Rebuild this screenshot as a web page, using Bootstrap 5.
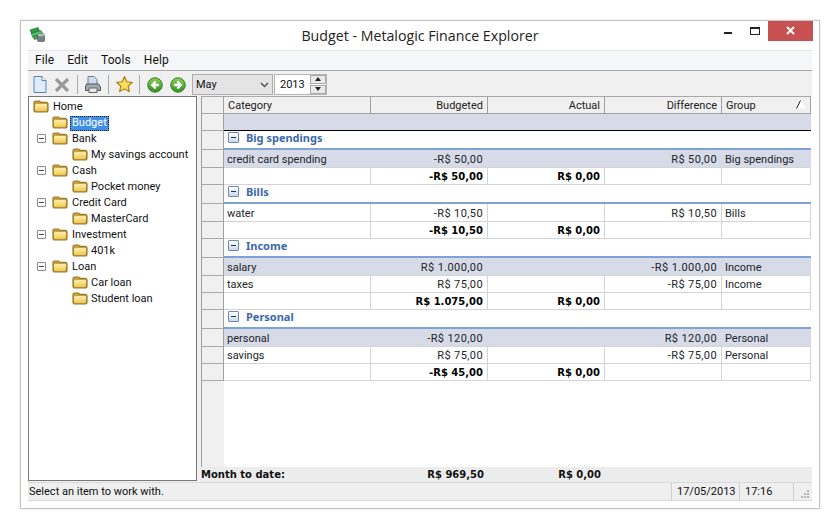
<!DOCTYPE html>
<html lang="en"><head><meta charset="utf-8"><title>Budget</title>
<link href="https://cdn.jsdelivr.net/npm/bootstrap@5.3.0/dist/css/bootstrap.min.css" rel="stylesheet">
<style>
html,body{height:100%;background:#fff;margin:0;overflow:hidden}
body{font:11px/14px Roboto,sans-serif;color:#111;padding:20px 20px 20px 20px}
.win{width:800px;height:489px;background:#fff;border:1px solid #c4c4c4;box-shadow:0 0 2px #ddd;padding:0 7px 7px}
.titlebar{height:29px;position:relative;flex:none}
.titlebar .t{font:14.2px/29px "Open Sans",sans-serif;color:#222;text-align:center;width:100%}
.appicon{position:absolute;left:1px;top:6px}
.wbtns{position:absolute;right:-1px;top:0;height:20px}
.wb{width:27px;height:20px}
.close{width:45px;height:20px;background:#c75050}
.menubar{height:21px;background:#f5f6f7;border-top:1px solid #e6e6e6;border-bottom:1px solid #a9a9a9;flex:none;font-size:12px;letter-spacing:.1px;padding-left:7px;gap:13px;line-height:19px}
.toolbar{height:25px;background:#f0f0f0;flex:none;padding:3px 0 0 0}
.sep{width:1px;height:19px;background:#aaa;margin:1px 0 0 7px}
.sep+svg{margin-left:7px}
.i-new{margin:2px 0 0 5px}.i-x{margin:4px 0 0 7px}.i-pr{margin-top:2px}.i-st{margin-top:2px}
.sep.s3{margin-left:6px}
.i-ar{margin:3px 0 0 7px}
.sel{width:81px;height:21px;background:#e4e4e4;border:1px solid #adadad;padding:0 3px;line-height:20px;margin-left:6px;position:relative}
.sel svg{position:absolute;right:3px;top:7px}
.spin{width:53px;height:21px;background:#fff;border:1px solid #b5b5b5;margin-left:1px;padding-left:5px;line-height:20px;position:relative}
.spin i{position:absolute;right:0;width:16px;height:9px;background:#eaeaea;border:1px solid #a8a8a8;display:block}
.spin i::after{content:"";position:absolute;left:4px;border:3px solid transparent}
.spin i.u{top:0}.spin i.u::after{top:-2px;border-bottom:4px solid #222}
.spin i.d{bottom:0}.spin i.d::after{top:1px;border-top:4px solid #222}
.main{flex:1;min-height:0;background:#f0f0f0}
.tree{width:169px;flex:none;height:385px;background:#fff;border:1px solid #777;padding-top:2px}
.node{height:16px;line-height:15px;white-space:nowrap}
.l1{padding-left:8px}.l0{padding-left:4px}.l2{padding-left:43px}
.node .lbl{margin-left:2px;display:inline-block;padding:0 2px;height:15px;line-height:14px}
.l2 .lbl{margin-left:1px}
.node .sp{display:inline-block;width:15px}
.node svg{vertical-align:-3px}
.tg{display:inline-block;width:9px;height:9px;border:1px solid #8a8a8a;border-radius:1px;position:relative;margin-right:6px;vertical-align:-1px}
.tg::after{content:"";position:absolute;left:1px;right:1px;top:3px;height:1px;background:#444}
.sel-lbl{background:#3f8fe8;color:#fff;outline:1px dotted #222;outline-offset:-1px}
.right{margin-left:4px;width:611px;flex:none;display:flex;flex-direction:column;min-width:0}
.gridarea{flex:1;background:#fff;position:relative;min-height:0}
.gridarea table{table-layout:fixed;border-collapse:separate;border-spacing:0;width:610px;margin:0;--bs-table-bg:transparent;font-size:11px;line-height:14px}
.gridarea::before{content:"";position:absolute;left:0;top:0;bottom:0;width:23px;background:#f0f0f0;border-left:1px solid #a0a0a0}
.gridarea td,.gridarea th{padding:0 3px 0 3px;border:0;border-right:1px solid #d4d4d4;border-bottom:1px solid #d4d4d4;font-weight:400;white-space:nowrap;overflow:hidden;position:relative;background-clip:padding-box}
.gridarea .r,.gridarea .n{padding-right:4px}
.gridarea td.rh,.gridarea th.rh{background:#f0f0f0;border-bottom:1px solid #a8a8a8;border-left:1px solid #a0a0a0;border-right:1px solid #a0a0a0;padding:0}
.gridarea thead th{height:18px;padding-top:2px;padding-left:4px;background:#f0f0f0;border-top:1px solid #a8a8a8;border-bottom:1px solid #a0a0a0;border-right:1px solid #a0a0a0;color:#222}
.band td:not(.rh){background:#d6dbe7;border-right-color:#d6dbe7}
tr.hdrband td{height:17px;background:#d6dbe7;border-bottom:1px solid #000!important;border-right:0!important}
tr.hdrband td.rh{border-bottom:1px solid #a8a8a8!important;border-right:1px solid #a0a0a0!important;background:#f0f0f0}
tr.grp td{height:19px;padding-left:4px;border-right:0;border-bottom:0;color:#3a69ad;font:700 11px/14px "Noto Sans",sans-serif;box-shadow:inset 0 -2px 0 #7fa2d8;padding-bottom:3px}
tr.grp td.rh{box-shadow:none;border-bottom:1px solid #a8a8a8;border-right:1px solid #a0a0a0}
.exp{display:inline-block;width:11px;height:11px;border:1px solid #6b89b5;background:linear-gradient(#fff,#cbd8ee);position:relative;margin-right:7px;vertical-align:-1px;border-radius:1px}
.exp::after{content:"";position:absolute;left:2px;right:2px;top:4px;height:1px;background:#234}
tr.d td{height:18px;padding-top:3px}tr.d2 td{height:17px;padding-top:2px}
tr.s td{height:17px;padding-top:2px;font:700 10px/14px "DejaVu Sans",sans-serif;color:#000}
.r{text-align:right}
.n{letter-spacing:.4px}
.g{padding-left:3px!important}
.sort{float:right;margin:1px 1px 0 0}
.foot{height:15px;background:#ececec;flex:none;display:flex;padding-top:1px;font:700 10px/14px "DejaVu Sans",sans-serif;color:#111}
.foot div{flex:none}
.foot .lab{width:170px}
.foot .v{width:117px;padding-right:4px;text-align:right}
.status{height:19px;flex:none;background:#efefef;border-top:1px solid #d9d9d9;border-bottom:1px solid #d9d9d9;line-height:17px;padding-left:1px;position:relative}
.status .c{border-left:1px solid #cfcfcf;padding-left:5px}
.c1{width:68px}.c2{width:54px}.c3{width:19px}
.grip{right:2px;bottom:1px}
</style></head><body>
<svg width="0" height="0" class="position-absolute"><defs>
<linearGradient id="fg" x1="0" y1="0" x2="0" y2="1"><stop offset="0" stop-color="#fff0b0"/><stop offset="1" stop-color="#edc555"/></linearGradient>
<linearGradient id="gg" x1="0" y1="0" x2="0" y2="1"><stop offset="0" stop-color="#8ed05a"/><stop offset="1" stop-color="#2f8f1f"/></linearGradient>
<symbol id="f" viewBox="0 0 16 13"><path d="M1 3Q1 1 3 1h3.5l1.3 1.3H13q2 0 2 2V10q0 2-2 2H3q-2 0-2-2z" fill="#c9a23e" stroke="#9a7826" stroke-width="1.2"/><path d="M2 5.3Q2.2 4 3.6 4h9.2q1.4 0 1.2 1.3L13.6 10q-.2 1.1-1.4 1.1H3.2q-1.2 0-1.2-1.1z" fill="url(#fg)"/></symbol>
</defs></svg>
<div class="win d-flex flex-column">
 <div class="titlebar">
  <svg class="appicon" width="17" height="15" viewBox="0 0 17 15"><path d="M1 3l8-2.5 1.6 3.5-8 2.5z" fill="#2f9a45" stroke="#1a6a2a" stroke-width=".6"/><path d="M2 6.5l10-3 2 3.5-10 3z" fill="#56c268" stroke="#1a6a2a" stroke-width=".6"/><path d="M3.5 9.5l5-1.5v3.5l-3 1z" fill="#3fa552" stroke="#1a6a2a" stroke-width=".6"/><rect x="8.5" y="7" width="7" height="7.5" rx="1.5" fill="#78808a" stroke="#444" stroke-width=".6"/><ellipse cx="12" cy="8" rx="3.4" ry="1.3" fill="#b6bcc2"/></svg>
  <div class="t">Budget - Metalogic Finance Explorer</div>
  <div class="wbtns d-flex">
   <div class="wb"><svg width="27" height="20"><rect x="10" y="11" width="8" height="2" fill="#222"/></svg></div>
   <div class="wb"><svg width="27" height="20"><rect x="9.5" y="6.5" width="9" height="7" fill="none" stroke="#222"/><rect x="9" y="6" width="10" height="2" fill="#222"/></svg></div>
   <div class="close d-flex align-items-center justify-content-center"><svg width="11" height="10"><path d="M2 1l7 7M9 1L2 8" stroke="#fff" stroke-width="2"/></svg></div>
  </div>
 </div>
 <div class="menubar d-flex"><span>File</span><span>Edit</span><span>Tools</span><span>Help</span></div>
 <div class="toolbar d-flex align-items-start">
  <svg class="i-new" width="14" height="17" viewBox="0 0 14 17"><path d="M1 .5h8l4 4v12H1z" fill="#dfeafa" stroke="#5c83b8"/><path d="M9 .5v4h4" fill="#fff" stroke="#5c83b8"/></svg>
  <svg class="i-x" width="16" height="14" viewBox="0 0 16 14"><path d="M2 1l12 12M14 1L2 13" stroke="#9a9a9a" stroke-width="3.2"/></svg>
  <div class="sep"></div>
  <svg class="i-pr" width="16" height="17" viewBox="0 0 16 17"><path d="M3 .5h6l3 3v5H3z" fill="#cfdcec" stroke="#6f7f96"/><path d="M1.5 8h12l2 3v3.5H.5V11z" fill="#a4aab2" stroke="#555"/><rect x="4" y="12" width="8" height="4.5" fill="#e8e8e8" stroke="#666"/></svg>
  <div class="sep"></div>
  <svg class="i-st" width="17" height="17" viewBox="0 0 20 20"><path d="M10 1l2.7 5.8 6.3.8-4.6 4.3 1.2 6.3L10 15.1l-5.6 3.1 1.2-6.3L1 7.6l6.3-.8z" fill="#fbdc5c" stroke="#b07a10" stroke-width="1.4"/></svg>
  <div class="sep s3"></div>
  <svg class="i-ar" width="16" height="16" viewBox="0 0 17 17"><circle cx="8.5" cy="8.5" r="7.7" fill="url(#gg)" stroke="#2d7a1c"/><path d="M12.8 8.5H6.5M9.2 4.8L5.5 8.5l3.7 3.7" stroke="#fff" stroke-width="2.4" fill="none"/></svg>
  <svg class="i-ar" width="16" height="16" viewBox="0 0 17 17"><circle cx="8.5" cy="8.5" r="7.7" fill="url(#gg)" stroke="#2d7a1c"/><path d="M4.2 8.5h6.3M7.8 4.8l3.7 3.7-3.7 3.7" stroke="#fff" stroke-width="2.4" fill="none"/></svg>
  <div class="sel">May<svg width="9" height="6"><path d="M1 1l3.5 3.5L8 1" stroke="#555" stroke-width="1.5" fill="none"/></svg></div>
  <div class="spin">2013<i class="u"></i><i class="d"></i></div>
 </div>
 <div class="main d-flex">
  <div class="tree">
   <div class="node l0"><svg width="16" height="13"><use href="#f"/></svg><span class="lbl">Home</span></div>
   <div class="node l1"><span class="sp"></span><svg width="16" height="13"><use href="#f"/></svg><span class="lbl sel-lbl">Budget</span></div>
   <div class="node l1"><span class="tg"></span><svg width="16" height="13"><use href="#f"/></svg><span class="lbl">Bank</span></div>
   <div class="node l2"><svg width="16" height="13"><use href="#f"/></svg><span class="lbl">My savings account</span></div>
   <div class="node l1"><span class="tg"></span><svg width="16" height="13"><use href="#f"/></svg><span class="lbl">Cash</span></div>
   <div class="node l2"><svg width="16" height="13"><use href="#f"/></svg><span class="lbl">Pocket money</span></div>
   <div class="node l1"><span class="tg"></span><svg width="16" height="13"><use href="#f"/></svg><span class="lbl">Credit Card</span></div>
   <div class="node l2"><svg width="16" height="13"><use href="#f"/></svg><span class="lbl">MasterCard</span></div>
   <div class="node l1"><span class="tg"></span><svg width="16" height="13"><use href="#f"/></svg><span class="lbl">Investment</span></div>
   <div class="node l2"><svg width="16" height="13"><use href="#f"/></svg><span class="lbl">401k</span></div>
   <div class="node l1"><span class="tg"></span><svg width="16" height="13"><use href="#f"/></svg><span class="lbl">Loan</span></div>
   <div class="node l2"><svg width="16" height="13"><use href="#f"/></svg><span class="lbl">Car loan</span></div>
   <div class="node l2"><svg width="16" height="13"><use href="#f"/></svg><span class="lbl">Student loan</span></div>
  </div>
  <div class="right">
   <div class="gridarea">
    <table class="table">
     <colgroup><col style="width:23px"><col style="width:147px"><col style="width:117px"><col style="width:117px"><col style="width:117px"><col style="width:89px"></colgroup>
     <thead><tr><th class="rh"></th><th>Category</th><th class="r">Budgeted</th><th class="r">Actual</th><th class="r">Difference</th><th>Group<svg class="sort" width="10" height="9" viewBox="0 0 10 9"><path d="M5 .5L9.5 8.5H.5z" fill="#fff"/><path d="M4.5 .5L.5 8.5" stroke="#222"/></svg></th></tr></thead>
     <tbody>
      <tr class="hdrband"><td class="rh"></td><td colspan="5"></td></tr>
      <tr class="grp"><td class="rh"></td><td colspan="5"><span class="exp"></span>Big spendings</td></tr>
      <tr class="d band"><td class="rh"></td><td>credit card spending</td><td class="r n">-R$ 50,00</td><td></td><td class="r n">R$ 50,00</td><td class="g">Big spendings</td></tr>
      <tr class="s"><td class="rh"></td><td></td><td class="r">-R$ 50,00</td><td class="r">R$ 0,00</td><td></td><td></td></tr>
      <tr class="grp"><td class="rh"></td><td colspan="5"><span class="exp"></span>Bills</td></tr>
      <tr class="d"><td class="rh"></td><td>water</td><td class="r n">-R$ 10,50</td><td></td><td class="r n">R$ 10,50</td><td class="g">Bills</td></tr>
      <tr class="s"><td class="rh"></td><td></td><td class="r">-R$ 10,50</td><td class="r">R$ 0,00</td><td></td><td></td></tr>
      <tr class="grp"><td class="rh"></td><td colspan="5"><span class="exp"></span>Income</td></tr>
      <tr class="d band"><td class="rh"></td><td>salary</td><td class="r n">R$ 1.000,00</td><td></td><td class="r n">-R$ 1.000,00</td><td class="g">Income</td></tr>
      <tr class="d2"><td class="rh"></td><td>taxes</td><td class="r n">R$ 75,00</td><td></td><td class="r n">-R$ 75,00</td><td class="g">Income</td></tr>
      <tr class="s"><td class="rh"></td><td></td><td class="r">R$ 1.075,00</td><td class="r">R$ 0,00</td><td></td><td></td></tr>
      <tr class="grp"><td class="rh"></td><td colspan="5"><span class="exp"></span>Personal</td></tr>
      <tr class="d band"><td class="rh"></td><td>personal</td><td class="r n">-R$ 120,00</td><td></td><td class="r n">R$ 120,00</td><td class="g">Personal</td></tr>
      <tr class="d2"><td class="rh"></td><td>savings</td><td class="r n">R$ 75,00</td><td></td><td class="r n">-R$ 75,00</td><td class="g">Personal</td></tr>
      <tr class="s"><td class="rh"></td><td></td><td class="r">-R$ 45,00</td><td class="r">R$ 0,00</td><td></td><td></td></tr>
     </tbody>
    </table>
   </div>
   <div class="foot"><div class="lab">Month to date:</div><div class="v">R$ 969,50</div><div class="v">R$ 0,00</div></div>
  </div>
 </div>
 <div class="status d-flex">
  <div class="flex-grow-1">Select an item to work with.</div>
  <div class="c c1">17/05/2013</div>
  <div class="c c2">17:16</div>
  <div class="c c3 position-relative"><svg class="position-absolute grip" width="9" height="9"><g fill="#b5b5b5"><rect x="6" y="0" width="2" height="2"/><rect x="3" y="3" width="2" height="2"/><rect x="6" y="3" width="2" height="2"/><rect x="0" y="6" width="2" height="2"/><rect x="3" y="6" width="2" height="2"/><rect x="6" y="6" width="2" height="2"/></g></svg></div>
 </div>
</div>
<script src="https://cdn.jsdelivr.net/npm/bootstrap@5.3.0/dist/js/bootstrap.bundle.min.js"></script>
</body></html>
